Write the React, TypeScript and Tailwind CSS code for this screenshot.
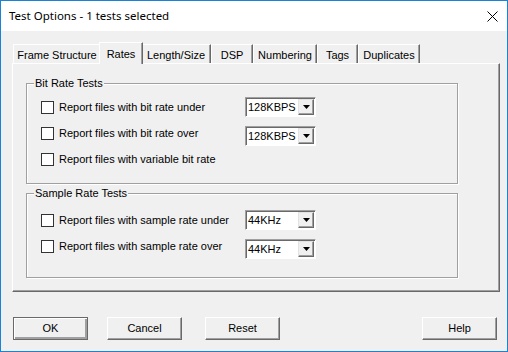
const tabs = [
  { label: "Frame Structure", w: "w-[88px]" },
  { label: "Rates", w: "w-[44px]", active: true },
  { label: "Length/Size", w: "w-[70px]" },
  { label: "DSP", w: "w-[42px]" },
  { label: "Numbering", w: "w-[64px]" },
  { label: "Tags", w: "w-[41px]" },
  { label: "Duplicates", w: "w-[62px]" },
];

function Combo({ value, nudge }: { value: string; nudge?: boolean }) {
  return (
    <div
      className={`flex h-[20px] w-[71px] border border-t-[#a0a0a0] border-l-[#a0a0a0] border-r-white border-b-white bg-white shadow-[inset_1px_1px_0_#696969] ${
        nudge ? "mt-[5px]" : ""
      }`}
    >
      <span className="flex-1 pl-[2px] pt-[2px] leading-[14px]">{value}</span>
      <div className="mt-[1px] mr-[1px] flex h-[16px] w-[16px] items-center justify-center border border-t-[#e3e3e3] border-l-[#e3e3e3] border-r-[#696969] border-b-[#696969] bg-[#f0f0f0] shadow-[inset_-1px_-1px_0_#a0a0a0]">
        <svg width="7" height="4" viewBox="0 0 7 4">
          <path d="M0 0h7L3.5 4z" fill="#000" />
        </svg>
      </div>
    </div>
  );
}

function Row({ label, combo, nudge }: { label: string; combo?: string; nudge?: boolean }) {
  return (
    <div className="flex h-[26px] items-center">
      <span className="h-[13px] w-[13px] border border-[#333] bg-white" />
      <span className="ml-[5px] w-[186px]">{label}</span>
      {combo && <Combo value={combo} nudge={nudge} />}
    </div>
  );
}

function Group({ title, h, pt, children }: { title: string; h: string; pt: string; children: React.ReactNode }) {
  return (
    <fieldset
      className={`${h} ${pt} w-[432px] border border-[#a0a0a0] pl-[14px] shadow-[1px_1px_0_#fff,inset_1px_1px_0_#fff]`}
    >
      <legend className="-ml-[7px] bg-[#f0f0f0] px-[1px] leading-[13px]">{title}</legend>
      {children}
    </fieldset>
  );
}

function Btn({ label, def, className = "" }: { label: string; def?: boolean; className?: string }) {
  return (
    <button
      className={`h-[23px] w-[75px] bg-[#f0f0f0] ${
        def
          ? "border border-[#696969] shadow-[inset_1px_1px_0_#fff,inset_-2px_-2px_0_#a0a0a0]"
          : "border border-t-white border-l-white border-r-[#696969] border-b-[#696969] shadow-[inset_-1px_-1px_0_#a0a0a0]"
      } ${className}`}
    >
      {label}
    </button>
  );
}

export default function App() {
  return (
    <div className="flex h-[352px] w-[508px] flex-col border border-[#1883d7] bg-white font-['Liberation_Sans',sans-serif] text-[11px] text-black">
      <div className="flex h-[30px] items-center justify-between pl-[8px] pr-[9px]">
        <span className="font-['Noto_Sans',sans-serif] text-[11.5px]">Test Options - 1 tests selected</span>
        <svg width="11" height="11" viewBox="0 0 11 11">
          <path d="M0.5 0.5l10 10M10.5 0.5l-10 10" stroke="#000" strokeWidth="1" />
        </svg>
      </div>

      <div className="flex flex-1 flex-col bg-[#f0f0f0] pl-[11px] pt-[11px]">
        <div className="flex h-[21px] items-end pl-[1px]">
          {tabs.map((t) =>
            t.active ? (
              <div
                key={t.label}
                className={`${t.w} relative z-10 -mx-[2px] -mb-px flex h-[22px] justify-center border-l border-t border-r border-t-white border-l-white border-r-[#696969] bg-[#f0f0f0] pt-[3px] shadow-[inset_-1px_0_0_#a0a0a0]`}
              >
                {t.label}
              </div>
            ) : (
              <div
                key={t.label}
                className={`${t.w} flex h-[19px] justify-center border-l border-t border-r border-t-white border-l-white border-r-[#696969] pt-[2px] shadow-[inset_-1px_0_0_#a0a0a0]`}
              >
                {t.label}
              </div>
            )
          )}
        </div>

        <div className="h-[229px] w-[488px] border border-t-white border-l-white border-r-[#696969] border-b-[#696969] pl-[13px] pt-[13px] shadow-[inset_-1px_-1px_0_#a0a0a0]">
          <Group title="Bit Rate Tests" h="h-[107px]" pt="pt-[4px]">
            <Row label="Report files with bit rate under" combo="128KBPS" />
            <Row label="Report files with bit rate over" combo="128KBPS" nudge />
            <Row label="Report files with variable bit rate" />
          </Group>
          <div className="h-[3px]" />
          <Group title="Sample Rate Tests" h="h-[91px]" pt="pt-[7px]">
            <Row label="Report files with sample rate under" combo="44KHz" />
            <Row label="Report files with sample rate over" combo="44KHz" nudge />
          </Group>
        </div>

        <div className="mt-[25px] flex pl-[1px]">
          <Btn label="OK" def />
          <Btn label="Cancel" className="ml-[19px]" />
          <Btn label="Reset" className="ml-[23px]" />
          <Btn label="Help" className="ml-[142px]" />
        </div>
      </div>
    </div>
  );
}
